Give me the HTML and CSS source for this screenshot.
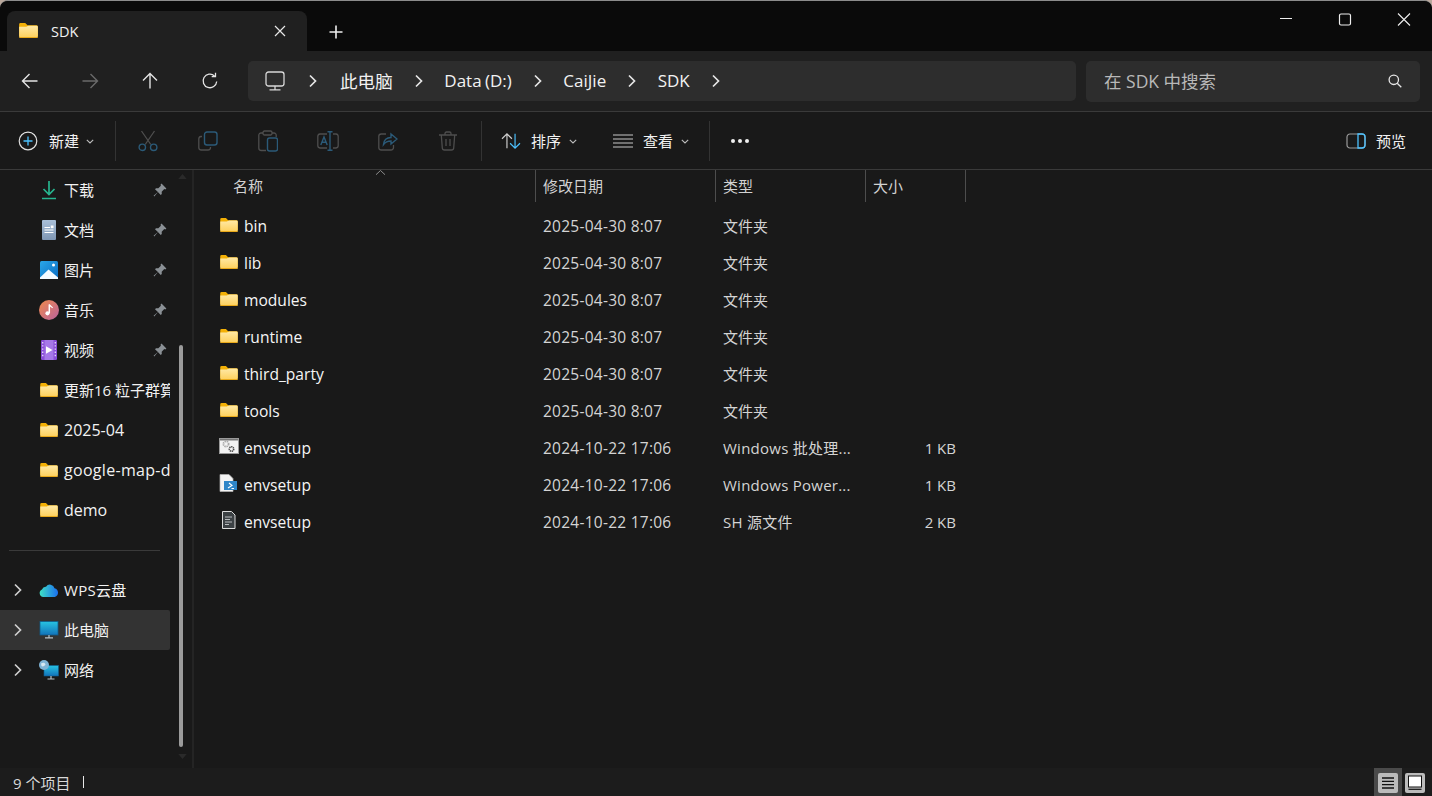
FILE: index.html
```html
<!DOCTYPE html>
<html lang="zh-CN">
<head>
<meta charset="utf-8">
<title>SDK - 文件资源管理器</title>
<link rel="stylesheet" href="styles.css">
</head>
<body>
<svg class="defs" width="0" height="0">
  <defs>
    <linearGradient id="fg" x1="0" y1="0" x2="0" y2="1"><stop offset="0" stop-color="#ffe9a6"/><stop offset="1" stop-color="#fdcf5a"/></linearGradient>
    <symbol id="folder" viewBox="0 0 20 16">
      <path d="M0 1.5A1.5 1.5 0 0 1 1.500 0H6.500L9 2.500H18.500A1.500 1.500 0 0 1 20 4V14H0Z" fill="#f3b006"/>
      <path d="M0 4H7.500L10 2.800H18.500A1.500 1.500 0 0 1 20 4.300V14.500A1.500 1.500 0 0 1 18.500 16H1.500A1.500 1.500 0 0 1 0 14.500Z" fill="url(#fg)"/>
      <path d="M0 14.800H20V14.900A1.200 1.200 0 0 1 18.800 16H1.200A1.200 1.200 0 0 1 0 14.900Z" fill="#e9a91a"/>
    </symbol>
    <symbol id="pin" viewBox="0 0 14 14">
      <path d="M8.500 .6 13.400 5.500 12.300 6.500 11.300 6.100 8.700 8.700 8.800 11 7.700 12 4.900 9.100 1.300 13.400.6 12.700 4.900 9.100 2 6.300 3 5.200 5.300 5.300 7.900 2.700 7.500 1.700Z" fill="#8a9095"/>
    </symbol>
    <symbol id="chev" viewBox="0 0 10 14">
      <path d="M2 1.500 7.500 7 2 12.500" fill="none" stroke="currentColor" stroke-width="1.700"/>
    </symbol>
    <symbol id="drop" viewBox="0 0 8 5">
      <path d="M.8 .8 4 4 7.200 .8" fill="none" stroke="currentColor" stroke-width="1.100"/>
    </symbol>
  </defs>
</svg>
<div class="window">
  <header class="tabbar">
    <div class="tab">
      <svg class="ico-tab"><use href="#folder"/></svg>
      <span class="tab-title">SDK</span>
      <svg class="tab-close" viewBox="0 0 12 12"><path d="M1 1 11 11M11 1 1 11" stroke="#e8e8e8" stroke-width="1.200"/></svg>
    </div>
    <svg class="tab-add" viewBox="0 0 14 14"><path d="M7 .5V13.500M.5 7H13.500" stroke="#eee" stroke-width="1.600"/></svg>
    <div class="winctl">
      <span class="winbtn"><svg viewBox="0 0 14 14" width="14" height="14"><path d="M1 6.500H13" stroke="#eee" stroke-width="1"/></svg></span>
      <span class="winbtn"><svg viewBox="0 0 14 14" width="14" height="14"><rect x="1.500" y="2" width="11" height="11" rx="1.500" fill="none" stroke="#eee" stroke-width="1.200"/></svg></span>
      <span class="winbtn"><svg viewBox="0 0 14 14" width="14" height="14"><path d="M1 1.500 13 13.500M13 1.500 1 13.500" stroke="#eee" stroke-width="1.100"/></svg></span>
    </div>
  </header>

  <nav class="navbar">
    <span class="navbtn"><svg viewBox="0 0 18 18" width="18" height="18"><path d="M16.500 9H2M8.500 2 1.500 9 8.500 16" fill="none" stroke="#e4e4e4" stroke-width="1.400"/></svg></span>
    <span class="navbtn"><svg viewBox="0 0 18 18" width="18" height="18"><path d="M1.500 9H16M9.500 2 16.500 9 9.500 16" fill="none" stroke="#6a6a6a" stroke-width="1.400"/></svg></span>
    <span class="navbtn"><svg viewBox="0 0 18 18" width="18" height="18"><path d="M9 16.500V2M2 8.500 9 1.500 16 8.500" fill="none" stroke="#e4e4e4" stroke-width="1.400"/></svg></span>
    <span class="navbtn"><svg viewBox="0 0 18 18" width="18" height="18"><path d="M15.700 9.500A6.800 6.800 0 1 1 13.500 3.900M14.500 .8V4.600H10.700" fill="none" stroke="#e4e4e4" stroke-width="1.300"/></svg></span>
    <div class="address">
      <svg class="addr-pc" viewBox="0 0 20 20"><rect x="1" y="1" width="18" height="14" rx="2.500" fill="none" stroke="#d8d8d8" stroke-width="1.300"/><path d="M10 15V18.500M4.500 18.800H15.500" stroke="#d8d8d8" stroke-width="1.300"/></svg>
      <svg class="addr-chev addr-first"><use href="#chev"/></svg>
      <span class="crumb crumb-cjk">此电脑</span>
      <svg class="addr-chev"><use href="#chev"/></svg>
      <span class="crumb">Data (D:)</span>
      <svg class="addr-chev"><use href="#chev"/></svg>
      <span class="crumb">CaiJie</span>
      <svg class="addr-chev"><use href="#chev"/></svg>
      <span class="crumb">SDK</span>
      <svg class="addr-chev"><use href="#chev"/></svg>
    </div>
    <div class="search">
      <span class="search-text">在 SDK 中搜索</span>
      <svg class="search-ico" viewBox="0 0 14 14"><circle cx="5.800" cy="5.800" r="4.700" fill="none" stroke="#e6e6e6" stroke-width="1.300"/><path d="M9.200 9.200 13.300 13.300" stroke="#e6e6e6" stroke-width="1.300"/></svg>
    </div>
  </nav>

  <div class="toolbar">
    <div class="tb-new">
      <svg class="tb-ico" viewBox="0 0 20 20"><circle cx="10" cy="10" r="8.800" fill="none" stroke="#e0e0e0" stroke-width="1.200"/><path d="M10 5.500V14.500M5.500 10H14.500" stroke="#4cc2ff" stroke-width="1.300"/></svg>
      <span class="tb-label">新建</span>
      <svg class="tb-drop"><use href="#drop"/></svg>
    </div>
    <span class="tb-sep"></span>
    <div class="tb-group">
      <span class="tb-off"><svg viewBox="0 0 20 22" width="20" height="22"><path d="M3.500 1 12.800 14.500M16.500 1 7.200 14.500" stroke="#4e4e4e" stroke-width="1.300"/><circle cx="4.300" cy="17.300" r="3.200" fill="none" stroke="#2b5a78" stroke-width="1.400"/><circle cx="15.700" cy="17.300" r="3.200" fill="none" stroke="#2b5a78" stroke-width="1.400"/></svg></span>
      <span class="tb-off"><svg viewBox="0 0 20 20" width="20" height="20"><path d="M4 5.500H3A2.500 2.500 0 0 0 .8 8V16.500A2.500 2.500 0 0 0 3.300 19H10A2.500 2.500 0 0 0 12.500 16.500V16" fill="none" stroke="#4e4e4e" stroke-width="1.300"/><rect x="6.500" y="1" width="12.500" height="13" rx="2.500" fill="none" stroke="#2b5a78" stroke-width="1.400"/></svg></span>
      <span class="tb-off"><svg viewBox="0 0 20 22" width="20" height="22"><path d="M5 3H3A2.200 2.200 0 0 0 .8 5.200V18A2.500 2.500 0 0 0 3.300 20.500H8M14 3H16A2.200 2.200 0 0 1 18.200 5.200V7" fill="none" stroke="#4e4e4e" stroke-width="1.300"/><rect x="5" y="1" width="9" height="4" rx="1.500" fill="none" stroke="#4e4e4e" stroke-width="1.300"/><rect x="9.500" y="8" width="10" height="13" rx="2" fill="none" stroke="#2b5a78" stroke-width="1.400"/></svg></span>
      <span class="tb-off"><svg viewBox="0 0 22 20" width="22" height="20"><path d="M10 3H3A2.500 2.500 0 0 0 .8 5.500V14.500A2.500 2.500 0 0 0 3 17H10M16 3H19A2.500 2.500 0 0 1 21.200 5.500V14.500A2.500 2.500 0 0 1 19 17H16" fill="none" stroke="#4e4e4e" stroke-width="1.300"/><path d="M13 .8V19.200M10.500 .8H15.500M10.500 19.200H15.500M3.800 14 7 6 10.200 14M5 11.200H9" fill="none" stroke="#2b5a78" stroke-width="1.400"/></svg></span>
      <span class="tb-off"><svg viewBox="0 0 20 20" width="20" height="20"><path d="M8 3H3.300A2.500 2.500 0 0 0 .8 5.500V16.500A2.500 2.500 0 0 0 3.300 19H13A2.500 2.500 0 0 0 15.500 16.500V14" fill="none" stroke="#4e4e4e" stroke-width="1.300"/><path d="M5.500 13.500C6 8.500 9 6.500 13 6.500V3L19 8 13 13V10C10 10 7.500 10.800 5.500 13.500Z" fill="none" stroke="#2b5a78" stroke-width="1.400"/></svg></span>
      <span class="tb-off"><svg viewBox="0 0 18 20" width="18" height="20"><path d="M0 4H18M6 4V2.500A1.500 1.500 0 0 1 7.500 1H10.500A1.500 1.500 0 0 1 12 2.500V4M2.300 4 3.300 17A2.200 2.200 0 0 0 5.500 19H12.500A2.200 2.200 0 0 0 14.700 17L15.700 4M7 8V15M11 8V15" fill="none" stroke="#4e4e4e" stroke-width="1.300"/></svg></span>
    </div>
    <span class="tb-sep tb-sep-b"></span>
    <div class="tb-sort">
      <svg class="tb-ico-w" viewBox="0 0 22 20"><path d="M6.500 18V2M1 7.500 6.500 2 12 7.500" fill="none" stroke="#cfcfcf" stroke-width="1.300"/><path d="M15.500 2V18M10 12.500 15.500 18 21 12.500" fill="none" stroke="#4cc2ff" stroke-width="1.300"/></svg>
      <span class="tb-label">排序</span>
      <svg class="tb-drop"><use href="#drop"/></svg>
    </div>
    <div class="tb-view">
      <svg class="tb-ico-w" viewBox="0 0 22 16"><path d="M1 2H21M1 6H21M1 10H21M1 14H21" stroke="#c8c8c8" stroke-width="1.200"/></svg>
      <span class="tb-label">查看</span>
      <svg class="tb-drop"><use href="#drop"/></svg>
    </div>
    <span class="tb-sep tb-sep-c"></span>
    <div class="tb-more"><i></i><i></i><i></i></div>
    <div class="tb-preview">
      <svg class="tb-ico-p" viewBox="0 0 20 16"><rect x="1" y="1" width="18" height="14" rx="3" fill="none" stroke="#9a9a9a" stroke-width="1.200"/><path d="M12 1H16A3 3 0 0 1 19 4V12A3 3 0 0 1 16 15H12Z" fill="none" stroke="#4cc2ff" stroke-width="1.300"/></svg>
      <span class="tb-label">预览</span>
    </div>
  </div>

  <div class="body">
    <aside class="side">
      <div class="tree">
        <div class="row"><svg class="ni" viewBox="0 0 20 20"><path d="M10 1V14M4.500 9 10 14.500 15.500 9" fill="none" stroke="#27b58f" stroke-width="1.700"/><path d="M3 18.500H17" stroke="#27b58f" stroke-width="1.700"/></svg><span class="rt">下载</span><svg class="pin"><use href="#pin"/></svg></div>
        <div class="row"><svg class="ni" viewBox="0 0 20 20"><defs><linearGradient id="dg" x1="0" y1="0" x2="0" y2="1"><stop offset="0" stop-color="#a9bfd8"/><stop offset="1" stop-color="#7f97b4"/></linearGradient></defs><rect x="3" y="0" width="14" height="20" rx="1" fill="url(#dg)"/><path d="M5.500 7.500H11M5.500 10H14.500M5.500 12.500H14.500" stroke="#fff" stroke-width="1.100"/><rect x="11.800" y="5.500" width="2.700" height="2.700" fill="#fff"/></svg><span class="rt">文档</span><svg class="pin"><use href="#pin"/></svg></div>
        <div class="row"><svg class="ni" viewBox="0 0 20 20"><defs><linearGradient id="pg" x1="0" y1="0" x2="1" y2="1"><stop offset="0" stop-color="#2aa7e8"/><stop offset="1" stop-color="#0a6cc2"/></linearGradient></defs><rect x="1" y="1" width="18" height="18" rx="1.500" fill="url(#pg)"/><path d="M1 19V17.500L9.500 9.500 19 17.500V19Z" fill="#f5fbff"/><circle cx="14.500" cy="5" r="1.500" fill="#fff"/></svg><span class="rt">图片</span><svg class="pin"><use href="#pin"/></svg></div>
        <div class="row"><svg class="ni" viewBox="0 0 20 20"><defs><linearGradient id="mg" x1="0" y1="0" x2="1" y2="1"><stop offset="0" stop-color="#ef8a4c"/><stop offset="1" stop-color="#b9629e"/></linearGradient></defs><circle cx="10" cy="10" r="10" fill="url(#mg)"/><path d="M10.300 4.500V13" stroke="#fff" stroke-width="1.500"/><path d="M10.300 4.500C11 6.500 13 6.500 13.500 8" stroke="#fff" stroke-width="1.200" fill="none"/><circle cx="8.500" cy="13.300" r="2.100" fill="#fff"/></svg><span class="rt">音乐</span><svg class="pin"><use href="#pin"/></svg></div>
        <div class="row"><svg class="ni" viewBox="0 0 20 20"><rect x="2" y="0" width="16" height="20" rx="1.200" fill="#8a4fd8"/><rect x="5.500" y="0" width="9" height="20" fill="#a678e8"/><path d="M7 6.200V13.800L13.500 10Z" fill="#fff"/><path d="M3.700 2V18M16.300 2V18" stroke="#e2d4fa" stroke-width="1.400" stroke-dasharray="1.400 1.800"/></svg><span class="rt">视频</span><svg class="pin"><use href="#pin"/></svg></div>
        <div class="row"><svg class="ni ni-f"><use href="#folder"/></svg><span class="rt">更新16 粒子群算</span></div>
        <div class="row"><svg class="ni ni-f"><use href="#folder"/></svg><span class="rt rt-l">2025-04</span></div>
        <div class="row"><svg class="ni ni-f"><use href="#folder"/></svg><span class="rt rt-l rt-g">google-map-d</span></div>
        <div class="row"><svg class="ni ni-f"><use href="#folder"/></svg><span class="rt rt-l">demo</span></div>
        <div class="tree-sep"></div>
        <div class="row row-c"><svg class="rc"><use href="#chev"/></svg><svg class="ni" viewBox="0 0 20 20"><defs><linearGradient id="cg" x1="0" y1="0" x2="1" y2="0"><stop offset="0" stop-color="#3fe0c4"/><stop offset="1" stop-color="#1a6ff0"/></linearGradient></defs><path d="M4.200 17A4 4 0 0 1 3 9.400 4 4 0 0 1 7 6.700 4.700 4.700 0 0 1 15.500 8.300 4.500 4.500 0 0 1 15.800 17Z" fill="url(#cg)"/></svg><span class="rt rt-g">WPS云盘</span></div>
        <div class="row row-c row-on"><svg class="rc"><use href="#chev"/></svg><svg class="ni" viewBox="0 0 20 20"><defs><linearGradient id="sg" x1="0" y1="0" x2="0" y2="1"><stop offset="0" stop-color="#27c3e2"/><stop offset="1" stop-color="#1273ba"/></linearGradient></defs><rect x="1" y="1.500" width="18" height="13.500" fill="url(#sg)" stroke="#0f5c8c" stroke-width=".8"/><path d="M10 15V17.300M6 17.800H14" stroke="#b8c2c8" stroke-width="1.200"/></svg><span class="rt">此电脑</span></div>
        <div class="row row-c"><svg class="rc"><use href="#chev"/></svg><svg class="ni" viewBox="0 0 20 20"><rect x="5" y="5.500" width="14.500" height="10.500" fill="url(#sg)" stroke="#0f5c8c" stroke-width=".6"/><path d="M12 16V18.500M8.500 19H15.500" stroke="#b8c2c8" stroke-width="1.200"/><circle cx="5" cy="5" r="5" fill="#7fb4d6"/><path d="M2 3.500C4 2 6 2.500 6.500 4.500 6 6 3.500 7 2.500 6Z" fill="#d6e8f2"/></svg><span class="rt">网络</span></div>
      </div>
      <div class="scroll">
        <svg class="sc-up" viewBox="0 0 10 6"><path d="M0 6 5 0 10 6Z" fill="#2a2a2a"/></svg>
        <div class="sc-thumb"></div>
        <svg class="sc-down" viewBox="0 0 10 6"><path d="M0 0H10L5 6Z" fill="#2a2a2a"/></svg>
      </div>
    </aside>

    <main class="list">
      <div class="lhead">
        <div class="hc hc-name">名称<svg class="sort-up" viewBox="0 0 10 5"><path d="M.5 4.700 5 .5 9.500 4.700" fill="none" stroke="#8c8c8c" stroke-width="1"/></svg></div>
        <div class="hc">修改日期</div>
        <div class="hc">类型</div>
        <div class="hc">大小</div>
      </div>
      <div class="lrow"><div class="fname"><svg class="fi"><use href="#folder"/></svg>bin</div><div class="fc fd">2025-04-30 8:07</div><div class="fc">文件夹</div><div class="fc fs"></div></div>
      <div class="lrow"><div class="fname"><svg class="fi"><use href="#folder"/></svg>lib</div><div class="fc fd">2025-04-30 8:07</div><div class="fc">文件夹</div><div class="fc fs"></div></div>
      <div class="lrow"><div class="fname"><svg class="fi"><use href="#folder"/></svg>modules</div><div class="fc fd">2025-04-30 8:07</div><div class="fc">文件夹</div><div class="fc fs"></div></div>
      <div class="lrow"><div class="fname"><svg class="fi"><use href="#folder"/></svg>runtime</div><div class="fc fd">2025-04-30 8:07</div><div class="fc">文件夹</div><div class="fc fs"></div></div>
      <div class="lrow"><div class="fname"><svg class="fi"><use href="#folder"/></svg>third_party</div><div class="fc fd">2025-04-30 8:07</div><div class="fc">文件夹</div><div class="fc fs"></div></div>
      <div class="lrow"><div class="fname"><svg class="fi"><use href="#folder"/></svg>tools</div><div class="fc fd">2025-04-30 8:07</div><div class="fc">文件夹</div><div class="fc fs"></div></div>
      <div class="lrow"><div class="fname"><svg class="fi fi-t" viewBox="0 0 20 16"><rect x=".5" y=".5" width="19" height="15" fill="#f2f2f2" stroke="#9a9a9a"/><rect x="1" y="1" width="18" height="1.500" fill="#777"/><circle cx="7" cy="6" r="2.600" fill="none" stroke="#a9a9a9" stroke-width="1.800" stroke-dasharray="1.400 .7"/><circle cx="12.500" cy="11" r="2.200" fill="none" stroke="#4a4a4a" stroke-width="1.600" stroke-dasharray="1.200 .6"/></svg>envsetup</div><div class="fc fd">2024-10-22 17:06</div><div class="fc ft-l">Windows 批处理...</div><div class="fc fs">1 KB</div></div>
      <div class="lrow"><div class="fname"><svg class="fi fi-t" viewBox="0 0 20 18"><path d="M1 .5H10L14 4.500V17.500H1Z" fill="#f4f4f4" stroke="#b5b5b5" stroke-width=".7"/><rect x="5" y="7" width="13" height="9" fill="#2f86c8"/><path d="M9 14 13 11.500 10 9M12.500 14.500H15" fill="none" stroke="#fff" stroke-width="1.100"/></svg>envsetup</div><div class="fc fd">2024-10-22 17:06</div><div class="fc ft-l">Windows Power...</div><div class="fc fs">1 KB</div></div>
      <div class="lrow"><div class="fname"><svg class="fi fi-t" viewBox="0 0 20 18"><path d="M3.500 .5H12.500L16 4V17.500H3.500Z" fill="#3c4144" stroke="#dcdcdc"/><path d="M6 6H13M6 8.500H11M6 11H13M6 13.500H10" stroke="#b9bdbf" stroke-width="1"/></svg>envsetup</div><div class="fc fd">2024-10-22 17:06</div><div class="fc ft-l">SH 源文件</div><div class="fc fs">2 KB</div></div>
    </main>
  </div>

  <footer class="status">
    <span class="count">9 个项目</span>
    <span class="caret"></span>
    <div class="views">
      <span class="vbtn vbtn-on"><b class="vface"><svg viewBox="0 0 20 20" width="20" height="20"><path d="M4 5H16M4 8.300H16M4 11.600H16M4 15H16" stroke="#111" stroke-width="1.300"/></svg></b></span>
      <span class="vbtn vbtn-2"><b class="vface"><svg viewBox="0 0 20 20" width="20" height="20"><rect x="3.500" y="3" width="13" height="11" fill="#fff" stroke="#111" stroke-width="1"/><path d="M3.500 16.300H16.500" stroke="#111" stroke-width="1.200"/></svg></b></span>
    </div>
  </footer>
</div>
</body>
</html>
```

FILE: styles.css
```css
* { box-sizing: border-box; }
html, body { margin: 0; padding: 0; height: 100%; background: #b9a79b; overflow: hidden; }
body { font-family: "Open Sans", "Noto Sans CJK SC", sans-serif; color: #f2f2f2; }
.defs { position: absolute; }
svg { display: block; flex: none; }

.window {
  width: 1432px; height: 796px; display: flex; flex-direction: column;
  border-top: 1px solid #8c8c8c; border-radius: 8px 8px 0 0; background: #191919; overflow: hidden;
}

/* title bar */
.tabbar { height: 50px; flex: none; background: #0a0a0a; display: flex; align-items: flex-end; padding-left: 7px; }
.tab { width: 300px; height: 40px; background: #202020; border-radius: 8px 8px 0 0; display: flex; align-items: center; padding-left: 12px; }
.ico-tab { width: 19px; height: 15px; margin-bottom: 2px; }
.tab-title { margin-left: 13px; font-size: 14.500px; font-weight: 500; }
.tab-close { width: 12px; height: 12px; margin-left: auto; margin-right: 21px; }
.tab-add { width: 14px; height: 14px; margin: 0 0 12px 22px; }
.winctl { margin-left: auto; margin-right: -1px; align-self: flex-start; display: flex; }
.winbtn { width: 59px; height: 36px; display: flex; align-items: center; justify-content: center; }

/* nav bar */
.navbar { height: 60px; flex: none; background: #202020; display: flex; align-items: flex-start; padding-top: 10px; }
.navbtn { width: 60px; height: 40px; display: flex; align-items: center; justify-content: center; }
.address { width: 828px; height: 40px; margin-left: 8px; background: #2d2d2d; border-radius: 5px; display: flex; align-items: center; padding-left: 17px; font-size: 17px; }
.addr-pc { width: 20px; height: 20px; }
.addr-chev { width: 10px; height: 14px; color: #e6e6e6; margin: 0 20.500px 0 21px; }
.addr-first { margin: 0 22px 0 23px; }
.crumb { line-height: 24px; white-space: nowrap; word-spacing: -1px; }
.crumb-cjk { font-size: 17.600px; }
.search { width: 334px; height: 41px; margin-left: 10px; background: #2d2d2d; border-radius: 5px; display: flex; align-items: center; padding: 0 18px 2px; font-size: 17.500px; color: #b8b8b8; }
.search-ico { width: 14px; height: 14px; margin-left: auto; }

/* tool bar */
.toolbar { height: 59px; flex: none; background: #191919; border-top: 1px solid #3a3a3a; border-bottom: 1px solid #3a3a3a; display: flex; align-items: center; font-size: 14px; padding-top: 1px; }
.tb-new { width: 115px; display: flex; align-items: center; padding-left: 18px; }
.tb-ico { width: 20px; height: 20px; }
.tb-label { font-size: 15px; line-height: 20px; white-space: nowrap; }
.tb-new .tb-label { margin-left: 11px; }
.tb-drop { width: 8px; height: 5px; color: #bdbdbd; margin-left: 7px; }
.tb-sep { width: 1px; height: 40px; background: #333; flex: none; }
.tb-group { display: flex; margin-left: 2px; }
.tb-off { width: 60px; height: 40px; display: flex; align-items: center; justify-content: center; }
.tb-sep-b { margin-left: 3px; }
.tb-sort { display: flex; align-items: center; padding-left: 18px; width: 118px; }
.tb-ico-w { width: 22px; height: 18px; }
.tb-ico-p { width: 20px; height: 16px; }
.tb-sort .tb-label, .tb-view .tb-label { margin-left: 9px; }
.tb-view { display: flex; align-items: center; padding-left: 12px; width: 109px; }
.tb-view .tb-drop, .tb-sort .tb-drop { margin-left: 8px; }
.tb-more { width: 60px; display: flex; justify-content: center; gap: 3px; }
.tb-more i { width: 4px; height: 4px; border-radius: 50%; background: #f0f0f0; }
.tb-preview { margin-left: auto; display: flex; align-items: center; padding-right: 26px; }
.tb-preview .tb-label { margin-left: 10px; }

/* body */
.body { flex: 1; min-height: 0; display: flex; background: #191919; }
.side { width: 194px; flex: none; display: flex; border-right: 2px solid #242424; }
.tree { width: 170px; flex: none; }
.row { height: 40px; display: flex; align-items: center; padding-left: 39px; font-size: 15px; overflow: hidden; position: relative; }
.row-c { padding-left: 13px; }
.row-on { background: #333; border-radius: 0 2px 2px 0; }
.rc { width: 10px; height: 14px; color: #cfcfcf; margin-right: 16px; }
.ni { width: 20px; height: 20px; }
.ni-f { width: 18px; height: 14px; margin: 0 1px 1px; }
.rt { margin-left: 5px; white-space: nowrap; line-height: 20px; margin-bottom: 1px; }
.rt-l { font-size: 16px; margin-bottom: 0; }
.rt-g { letter-spacing: .3px; }
.pin { width: 14px; height: 14px; margin-left: auto; margin-right: 3px; }
.tree-sep { height: 40px; display: flex; align-items: center; padding: 0 10px 0 9px; }
.tree-sep::before { content: ""; display: block; height: 1px; width: 100%; background: #3a3a3a; }
.scroll { flex: 1; display: flex; flex-direction: column; align-items: center; padding: 4px 0 8px; }
.sc-up { width: 9px; height: 5px; margin-left: 2px; }
.sc-thumb { width: 4px; height: 402px; background: #9b9b9b; border-radius: 2px; margin-top: 166px; }
.sc-down { width: 9px; height: 5px; margin-top: 7px; margin-left: 2px; }

.list { flex: 1; min-width: 0; }
.lhead { display: grid; grid-template-columns: 342px 180px 150px 100px; height: 32px; justify-content: start; }
.hc { border-right: 1px solid #4d4d4d; padding: 0 0 2px 7px; font-size: 15px; color: #d2d2d2; display: flex; align-items: center; height: 32px; position: relative; }
.hc-name { padding-left: 39px; }
.sort-up { position: absolute; left: 181px; top: 0; width: 11px; height: 5px; }
.lrow { display: grid; grid-template-columns: 342px 180px 150px 90px; height: 37px; align-items: center; }
.lhead + .lrow { margin-top: 5px; }
.fname { display: flex; align-items: center; padding-left: 26px; font-size: 15.600px; color: #f5f5f5; }
.fi { width: 18px; height: 14px; margin-right: 6px; margin-bottom: 2px; }
.fi-t { width: 20px; height: 18px; margin-right: 5px; margin-left: -1px; margin-bottom: 3px; }
.fc { padding-left: 7px; font-size: 15px; color: #d4d4d4; white-space: nowrap; }
.fd { font-size: 15.500px; letter-spacing: .25px; }
.ft-l { letter-spacing: .25px; }
.fs { text-align: right; padding: 0; }

/* status bar */
.status { height: 28px; flex: none; background: #1c1c1c; display: flex; align-items: center; padding-left: 13px; font-size: 15px; color: #d8d8d8; }
.caret { width: 1px; height: 12px; background: #e8e8e8; margin-left: 13px; }
.views { margin-left: auto; display: flex; padding-right: 7px; align-self: stretch; }
.vbtn { width: 28px; display: flex; align-items: center; justify-content: center; padding-top: 2px; }
.vbtn-2 { width: 20px; margin-left: 3px; }
.vbtn-on { background: #4a4a4a; }
.vface { width: 20px; height: 20px; background: #bbb; border-radius: 2px; display: block; flex: none; }
```
